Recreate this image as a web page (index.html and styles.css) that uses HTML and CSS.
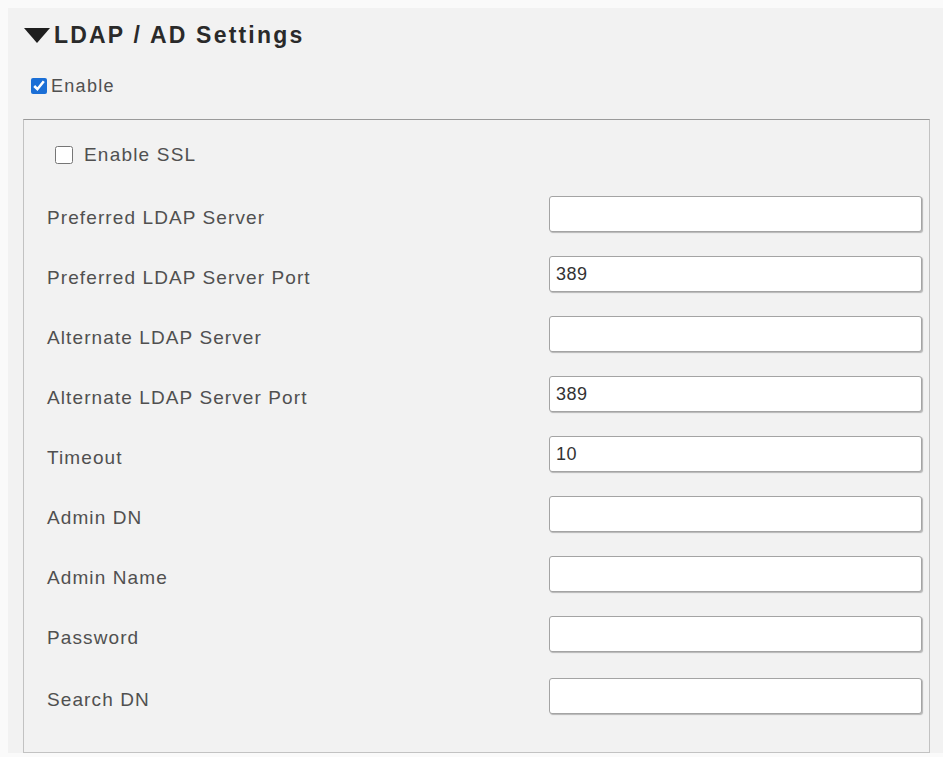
FILE: index.html
```html
<!DOCTYPE html>
<html lang="en">
<head>
  <meta charset="UTF-8">
  <meta name="viewport" content="width=device-width, initial-scale=1.0">
  <title>LDAP / AD Settings</title>
  <link rel="stylesheet" href="styles.css">
</head>
<body>
  <div class="page">
    <!-- Section title -->
    <h2 class="section-title">
      <svg class="caret" width="26" height="15" viewBox="0 0 26 15"><polygon points="0,0 26,0 13,15" fill="#1e1e1e"/></svg>
      LDAP / AD Settings
    </h2>

    <label class="enable-row"><input type="checkbox" class="enable-check" checked> Enable</label>

    <!-- LDAP settings box -->
    <div class="settings-box">
      <label class="ssl-row"><input type="checkbox" class="ssl-check"> Enable SSL</label>

      <div class="row">
        <label for="prefServer">Preferred LDAP Server</label>
        <input type="text" id="prefServer">
      </div>
      <div class="row">
        <label for="prefPort">Preferred LDAP Server Port</label>
        <input type="text" id="prefPort" value="389">
      </div>
      <div class="row">
        <label for="altServer">Alternate LDAP Server</label>
        <input type="text" id="altServer">
      </div>
      <div class="row">
        <label for="altPort">Alternate LDAP Server Port</label>
        <input type="text" id="altPort" value="389">
      </div>
      <div class="row">
        <label for="timeout">Timeout</label>
        <input type="text" id="timeout" value="10">
      </div>
      <div class="row">
        <label for="adminDn">Admin DN</label>
        <input type="text" id="adminDn">
      </div>
      <div class="row">
        <label for="adminName">Admin Name</label>
        <input type="text" id="adminName">
      </div>
      <div class="row">
        <label for="password">Password</label>
        <input type="password" id="password">
      </div>
      <div class="row last">
        <label for="searchDn">Search DN</label>
        <input type="text" id="searchDn">
      </div>
    </div>
  </div>
</body>
</html>
```

FILE: styles.css
```css
/* General */
body {
  margin: 0;
  background: #fafafa;
  font-family: "Liberation Sans", Arial, sans-serif;
  color: #505050;
}

.page {
  margin: 8px 0 0 8px;
  padding: 14px 13px 0 15px;
  background: #f2f2f2;
}

/* Title */
.section-title {
  display: flex;
  align-items: center;
  gap: 4px;
  margin: 0;
  font-size: 23px;
  line-height: 26px;
  letter-spacing: 2.2px;
  color: #2a2a2a;
}

.caret {
  margin-left: 1px;
}

.enable-row {
  display: flex;
  align-items: center;
  gap: 4px;
  margin-top: 29px;
  padding-left: 8px;
  height: 18px;
  font-size: 18px;
  letter-spacing: 1.3px;
}

.enable-check {
  width: 16px;
  height: 16px;
  margin: 0;
  accent-color: #1b6fd6;
}

/* Settings box */
.settings-box {
  display: flex;
  flex-direction: column;
  margin-top: 24px;
  border: 1px solid #c2c2c2;
  border-top-color: #9a9a9a;
  padding: 26px 7px 38px 23px;
}

.ssl-row {
  display: flex;
  align-items: center;
  gap: 11px;
  height: 18px;
  margin-bottom: 32px;
  padding-left: 8px;
  font-size: 19px;
  letter-spacing: 1.2px;
}

.ssl-check {
  width: 18px;
  height: 18px;
  margin: 0;
}

.row {
  display: grid;
  grid-template-columns: 1fr 373px;
  align-items: center;
  margin-bottom: 24px;
}

.row.last {
  margin-top: 2px;
  margin-bottom: 0;
}

.row label {
  padding-top: 7px;
  font-size: 19px;
  letter-spacing: 1.1px;
}

.row input {
  box-sizing: border-box;
  width: 373px;
  height: 36px;
  margin: 0;
  padding: 0 6px;
  background: #fff;
  border: 1px solid #a4a4a4;
  border-radius: 3px;
  box-shadow: 1px 1px 1px rgba(0, 0, 0, 0.25);
  font-family: "Liberation Sans", Arial, sans-serif;
  font-size: 18px;
  letter-spacing: 0.5px;
  color: #333;
}
```
